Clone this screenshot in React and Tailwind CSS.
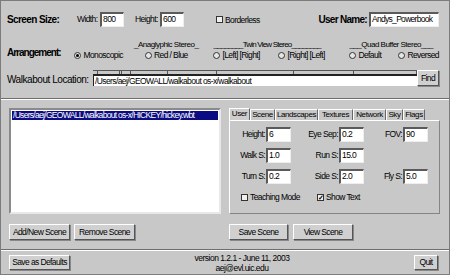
import React from 'react';

const font = { fontFamily: '"Liberation Sans", Arial, sans-serif' };

const Input = ({ value, w, track = 'tracking-[-0.6px]' }) => (
    <div className={`${w} h-[15px] shrink-0 bg-white border-t-2 border-l-2 border-[#5a5a5a] border-b border-r border-b-[#eeeeee] border-r-[#eeeeee] text-[8.5px] ${track} leading-[11px] pl-[1px] text-black overflow-hidden whitespace-nowrap`}>
        {value}
    </div>
);

const Btn = ({ children, w, h = 'h-[16px]' }) => (
    <div className={`${w} ${h} shrink-0 flex items-center justify-center bg-[#d0d0d0] border border-t-white border-l-white border-b-[#555] border-r-[#555] shadow-[1px_1px_0_#888] text-[8.5px] tracking-[-0.6px] text-black whitespace-nowrap`}>
        {children}
    </div>
);

const Radio = ({ label, on }) => (
    <div className="flex items-center gap-[2px] text-[8.5px] tracking-[-0.6px] leading-[10px] whitespace-nowrap">
        <div className="w-[7px] h-[7px] shrink-0 rounded-full border border-[#333] bg-[#e6e6e6] flex items-center justify-center">
            {on && <div className="w-[3px] h-[3px] rounded-full bg-black" />}
        </div>
        {label}
    </div>
);

const Check = ({ label, on }) => (
    <div className="flex items-center gap-[2px] text-[8.5px] tracking-[-0.6px] leading-[10px] whitespace-nowrap">
        <div className="w-[7px] h-[7px] shrink-0 border border-[#333] bg-[#f0f0f0] flex items-center justify-center text-[7px] leading-none font-bold tracking-normal">
            {on ? '✓' : ''}
        </div>
        {label}
    </div>
);

const Field = ({ label, value, lw }) => (
    <div className="flex items-center">
        <div className={`${lw} text-right text-[8.5px] tracking-[-0.6px] pr-[1px] whitespace-nowrap`}>{label}</div>
        <Input value={value} w="w-[25px]" />
    </div>
);

const tabs = [
    ['User', 'w-[21px]'],
    ['Scene', 'w-[25px]'],
    ['Landscapes', 'w-[43px]'],
    ['Textures', 'w-[35px]'],
    ['Network', 'w-[33px]'],
    ['Sky', 'w-[17px]'],
    ['Flags', 'w-[22px]'],
];

export default function App() {
    return (
        <div style={font} className="w-[450px] h-[275px] bg-[#c8c8c8] text-black flex flex-col border border-[#7c7c7c] overflow-hidden">
            {/* top settings */}
            <div className="h-[98px] flex flex-col border-b border-[#6e6e6e] pl-[6px] pr-[10px]">
                <div className="flex items-center mt-[11px] h-[15px]">
                    <div className="w-[70px] text-[10px] font-bold tracking-[-0.6px] whitespace-nowrap">Screen Size:</div>
                    <div className="w-[23px] text-[8.5px] tracking-[-0.6px]">Width:</div>
                    <Input value="800" w="w-[24px]" />
                    <div className="w-[25px] text-[8.5px] tracking-[-0.6px] ml-[11px]">Height:</div>
                    <Input value="600" w="w-[24px]" />
                    <div className="ml-[32px]"><Check label="Borderless" /></div>
                    <div className="flex-1" />
                    <div className="text-[10px] font-bold tracking-[-0.7px] mr-[2px] whitespace-nowrap">User Name:</div>
                    <Input value="Andys_Powerbook" w="w-[70px]" track="tracking-[-0.7px]" />
                </div>
                <div className="flex items-end mt-[13px]">
                    <div className="w-[68px] text-[10px] font-bold tracking-[-1px] leading-[12px] mb-[1px] whitespace-nowrap">Arrangement:</div>
                    <div className="w-[60px] flex flex-col">
                        <div className="h-[10px]" />
                        <Radio label="Monoscopic" on />
                    </div>
                    <div className="w-[80px] flex flex-col text-[8px] tracking-[-0.5px] leading-[10px]">
                        <div className="whitespace-nowrap">_Anaglyphic Stereo_</div>
                        <div className="pl-[11px]"><Radio label="Red / Blue" /></div>
                    </div>
                    <div className="w-[137px] flex flex-col text-[8px] leading-[10px]">
                        <div className="whitespace-nowrap tracking-[-0.8px]">________Twin View Stereo________</div>
                        <div className="flex">
                            <div className="w-[65px]"><Radio label="[Left] [Right]" /></div>
                            <Radio label="[Right] [Left]" />
                        </div>
                    </div>
                    <div className="flex-1 flex flex-col text-[8px] tracking-[-0.5px] leading-[10px]">
                        <div className="whitespace-nowrap">___Quad Buffer Stereo___</div>
                        <div className="flex">
                            <div className="w-[49px]"><Radio label="Default" /></div>
                            <Radio label="Reversed" />
                        </div>
                    </div>
                </div>
                <div className="flex items-end mt-[10px]">
                    <div className="w-[86px] text-[10px] tracking-[-0.45px] leading-[13px] whitespace-nowrap">Walkabout Location:</div>
                    <div className="flex-1 flex flex-col">
                        <svg width="324" height="4" className="block">
                            <line x1="0" y1="0.5" x2="324" y2="0.5" stroke="#555" />
                            {[4, 26, 28, 37, 74, 123, 200, 260, 323].map(x => (
                                <line key={x} x1={x + 0.5} y1="0" x2={x + 0.5} y2="4" stroke="#555" />
                            ))}
                        </svg>
                        <div className="h-[12px] bg-white border-t-2 border-l border-[#222] text-[8.5px] tracking-[-0.6px] leading-[10px] pl-[1px] whitespace-nowrap overflow-hidden">/Users/aej/GEOWALL/walkabout os-x/walkabout</div>
                    </div>
                    <Btn w="w-[22px]">Find</Btn>
                </div>
            </div>

            {/* scenes */}
            <div className="h-[151px] flex flex-col border-t border-white border-b border-b-[#6e6e6e] pl-[8px] pr-[9px]">
                <div className="flex mt-[8px] h-[106px]">
                    <div className="w-[212px] shrink-0 bg-white border-2 border-[#8a8a8a] border-b-[#e8e8e8] border-r-[#e8e8e8] p-[1px]">
                        <div className="h-[9px] bg-[#0c0c82] text-white text-[8.5px] tracking-[-0.7px] leading-[9px] pl-[1px] whitespace-nowrap overflow-hidden">/Users/aej/GEOWALL/walkabout os-x/HICKEY/hickey.wbt</div>
                    </div>
                    <div className="ml-[8px] flex-1 flex flex-col">
                        <div className="flex items-end h-[12px]">
                            {tabs.map(([t, w], i) => (
                                <div key={t} className={`${w} ${i === 0 ? 'h-[12px] bg-[#cdcdcd]' : 'h-[11px]'} text-center border-t border-l border-white border-r border-r-[#666] text-[8px] tracking-[-0.4px] leading-[10px] whitespace-nowrap`}>{t}</div>
                            ))}
                        </div>
                        <div className="flex-1 border border-t-white border-l-white border-b-[#858585] border-r-[#858585] flex flex-col pt-[6px]">
                            <div className="flex flex-col gap-[6px]">
                                <div className="flex">
                                    <Field label="Height:" value="6" lw="w-[36px]" />
                                    <Field label="Eye Sep:" value="0.2" lw="w-[48px]" />
                                    <Field label="FOV:" value="90" lw="w-[39px]" />
                                </div>
                                <div className="flex">
                                    <Field label="Walk S:" value="1.0" lw="w-[36px]" />
                                    <Field label="Run S:" value="15.0" lw="w-[48px]" />
                                </div>
                                <div className="flex">
                                    <Field label="Turn S:" value="0.2" lw="w-[36px]" />
                                    <Field label="Side S:" value="2.0" lw="w-[48px]" />
                                    <Field label="Fly S:" value="5.0" lw="w-[39px]" />
                                </div>
                            </div>
                            <div className="flex mt-[8px] pl-[11px]">
                                <div className="w-[76px]"><Check label="Teaching Mode" /></div>
                                <Check label="Show Text" on />
                            </div>
                        </div>
                    </div>
                </div>
                <div className="flex mt-[10px]">
                    <div className="flex gap-[4px] w-[220px]">
                        <Btn w="w-[61px]">Add/New Scene</Btn>
                        <Btn w="w-[61px]">Remove Scene</Btn>
                    </div>
                    <div className="flex gap-[5px]">
                        <Btn w="w-[59px]">Save Scene</Btn>
                        <Btn w="w-[60px]">View Scene</Btn>
                    </div>
                </div>
            </div>

            {/* bottom bar */}
            <div className="flex-1 flex items-center border-t border-white pl-[8px] pr-[11px]">
                <Btn w="w-[61px]" h="h-[15px]">Save as Defaults</Btn>
                <div className="flex-1 text-center text-[8.5px] tracking-[-0.5px] leading-[10px]">
                    <div>version 1.2.1 - June 11, 2003</div>
                    <div>aej@evl.uic.edu</div>
                </div>
                <Btn w="w-[24px]" h="h-[15px]">Quit</Btn>
            </div>
        </div>
    );
}
